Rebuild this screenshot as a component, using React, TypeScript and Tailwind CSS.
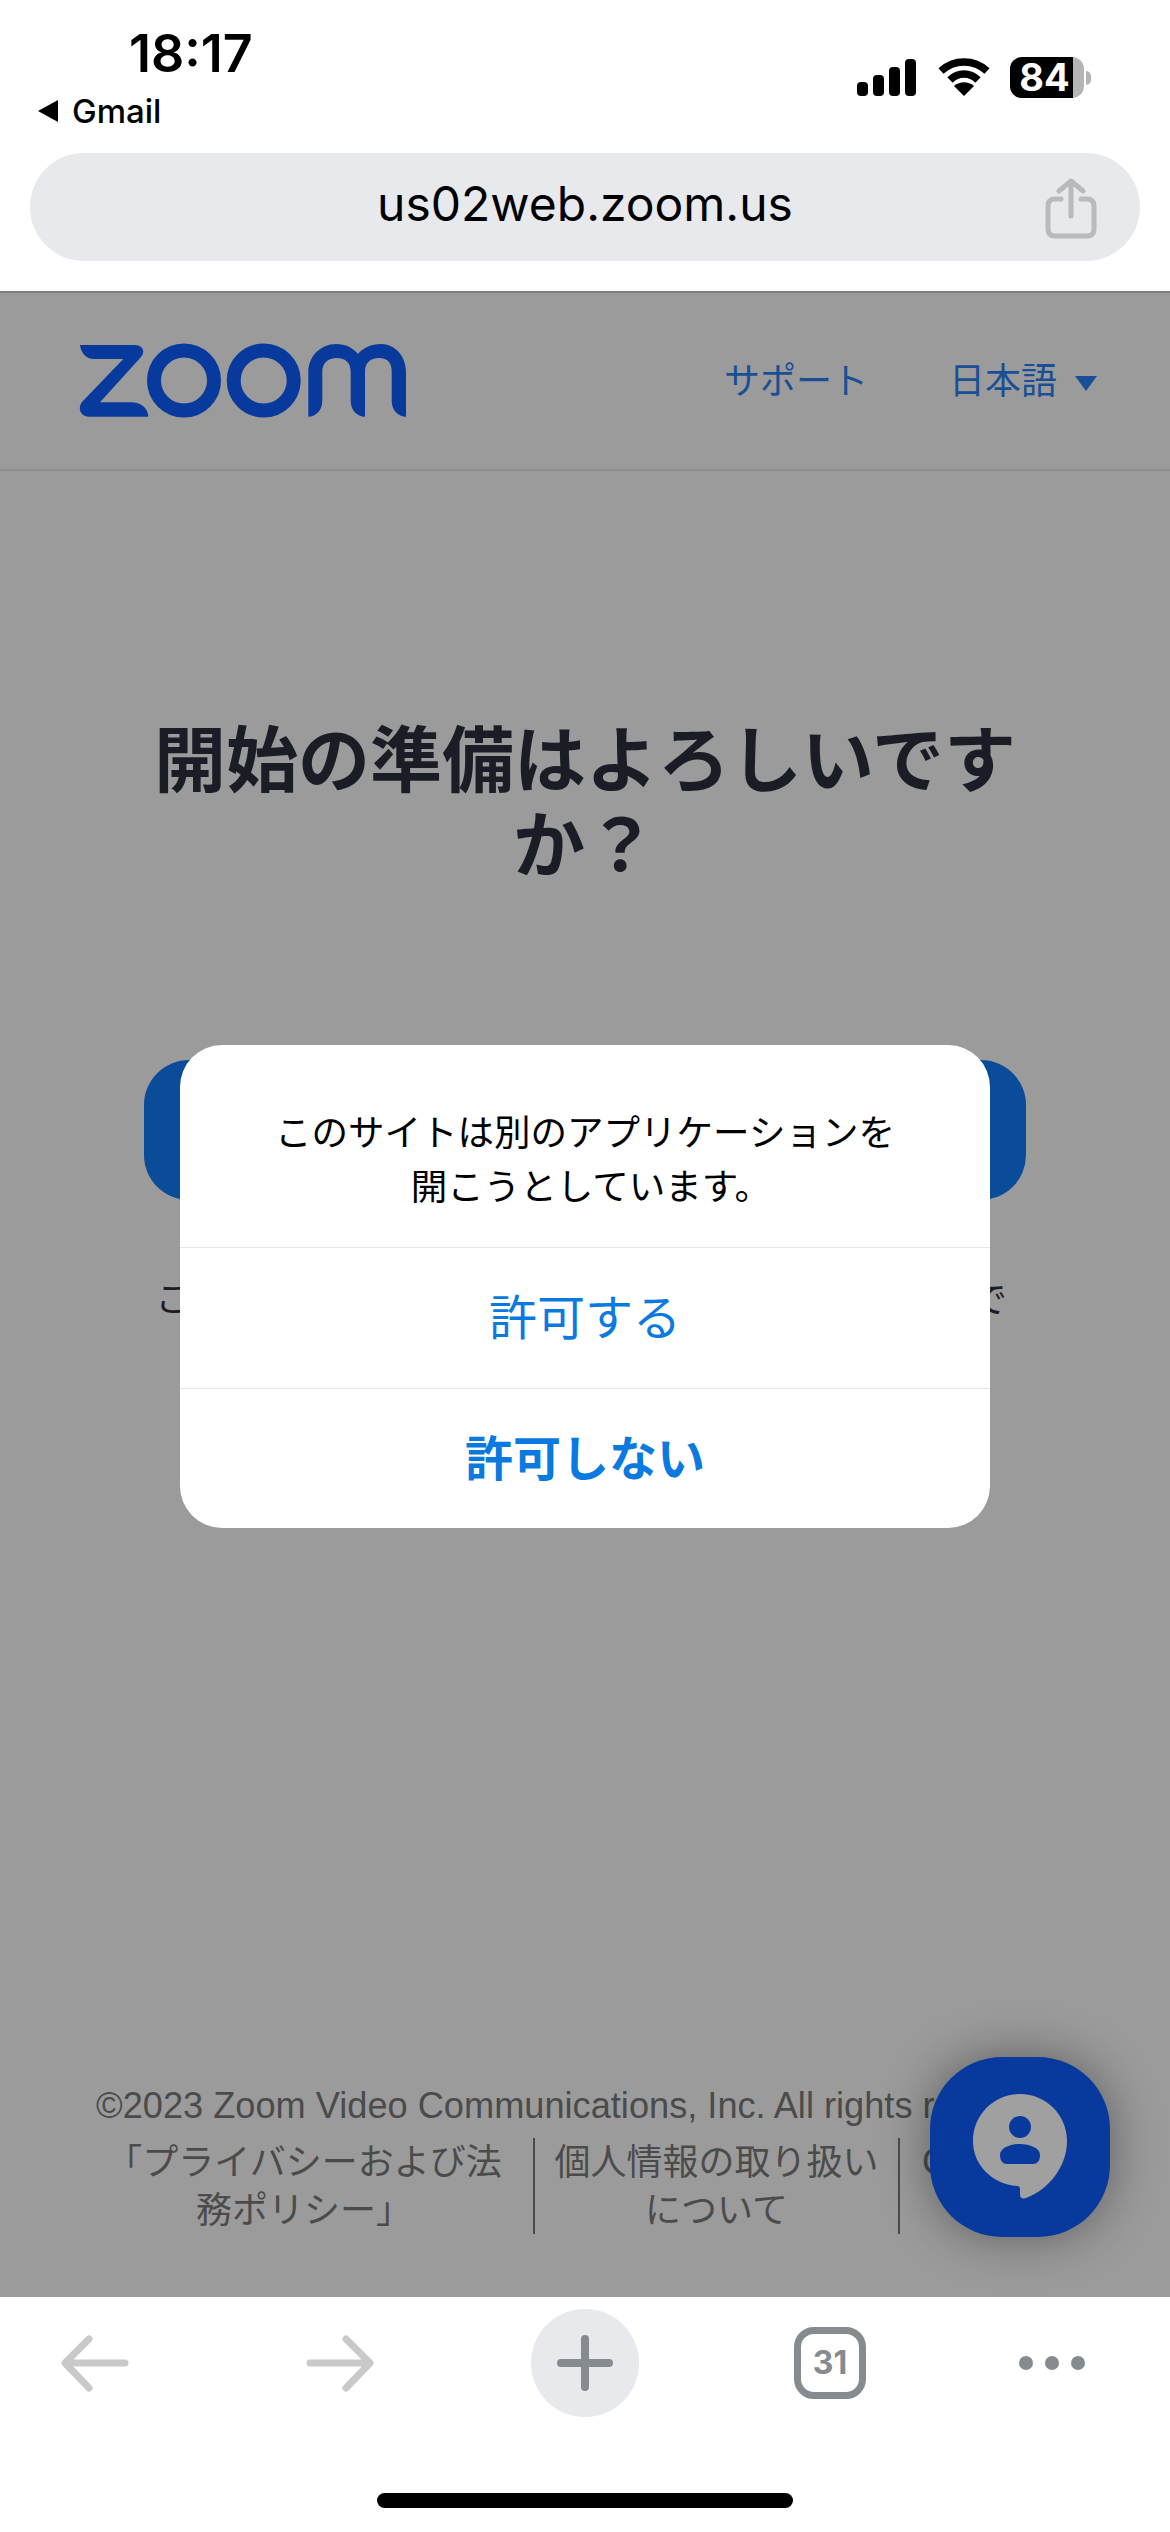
import React from 'react';

function ZoomLogo() {
  return (
    <svg width="330" height="76" viewBox="0 0 330 76" fill="#083a9e">
      <path d="M2 2H57C64 2 68 8 63 14L22 59.3H53C63 59.3 70 65 70.3 73.7H11C3 73.7-1 66 4 59L45.3 16H16C8 16 3 10 2 2Z" />
      <circle cx="106" cy="37.5" r="30" fill="none" stroke="#083a9e" strokeWidth="14" />
      <circle cx="185.7" cy="37.5" r="30" fill="none" stroke="#083a9e" strokeWidth="14" />
      <path d="M230.3 73.7V29C230.3 13 243 1 258 1C268 1 275 5 280 11C285 5 293 1 303 1C317 1 328 13 328 29V73.7C320 73.7 313.7 67 313.7 58V29C313.7 20 310 15 301 15C292 15 287 20 287 29V73.7C279 73.7 272.7 67 272.7 58V29C272.7 20 268 15 258.5 15C250 15 244.3 20 244.3 29V58C244.3 67 238 73.7 230.3 73.7Z" />
    </svg>
  );
}

function StatusBar() {
  return (
    <div className="flex justify-between h-[153px]">
      <div className="pl-[38px] pt-[25px]">
        <div className="ml-[91px] text-[52px] leading-[58px] font-semibold text-black">18:17</div>
        <div className="flex items-center mt-[10px] h-[36px]">
          <svg width="20" height="22" viewBox="0 0 20 22" fill="black">
            <path d="M20 0V22L0 11Z" />
          </svg>
          <span className="ml-[14px] text-[33px] leading-[36px] font-medium text-black">Gmail</span>
        </div>
      </div>
      <div className="flex items-start pt-[57px] pr-[79px]">
        <svg width="60" height="38" viewBox="0 0 60 38" fill="black" className="mt-[1px]">
          <rect x="0" y="24" width="11" height="14" rx="4" />
          <rect x="16" y="17" width="11" height="21" rx="4" />
          <rect x="32" y="9" width="11" height="29" rx="4" />
          <rect x="48" y="1" width="11" height="37" rx="4" />
        </svg>
        <svg width="52" height="38" viewBox="0 0 52 38" className="ml-[21px] mt-[1px]" fill="none" stroke="black" strokeWidth="7.5">
          <path d="M3 13C16 1 36 1 49 13" />
          <path d="M12 22C20 14 32 14 40 22" />
          <path d="M26 38L16 28C22 23 30 23 36 28Z" fill="black" stroke="none" />
        </svg>
        <div className="ml-[20px] flex items-center">
          <div className="w-[74px] h-[41px] rounded-[12px] bg-[#b5b5b5]">
            <div className="w-[63px] h-[41px] rounded-l-[12px] bg-black flex items-center justify-center pl-[6px]">
              <span className="text-[38px] leading-[41px] font-bold text-white">84</span>
            </div>
          </div>
          <div className="ml-[2px] w-[5px] h-[14px] rounded-r-full bg-[#b5b5b5]" />
        </div>
      </div>
    </div>
  );
}

function UrlBar() {
  return (
    <div className="h-[138px] px-[30px]">
      <div className="relative h-[108px] rounded-[54px] bg-[#e8e9ed] flex items-center justify-center">
        <span className="text-[48px] leading-[60px] text-black pb-[6px]">us02web.zoom.us</span>
        <svg width="52" height="62" viewBox="0 0 52 62" fill="none" stroke="#b9babd" strokeWidth="5" strokeLinecap="round" strokeLinejoin="round" className="absolute right-[43px] top-[25px]">
          <path d="M16 21H10C5.500 21 3 23.500 3 28V51C3 55.500 5.500 58 10 58H42C46.500 58 49 55.500 49 51V28C49 23.500 46.500 21 42 21H36" />
          <path d="M26 38V3M14 13L26 3L38 13" />
        </svg>
      </div>
    </div>
  );
}

function ChatButton() {
  return (
    <div className="absolute left-[930px] top-[1764px] w-[180px] h-[180px] rounded-[72px] bg-[#083a9e] shadow-[0_0_50px_rgba(0,0,0,0.4)]">
      <svg width="180" height="180" viewBox="0 0 180 180">
        <path d="M90 37C116 37 137 58 137 84C137 110 118 133 96 141C93 142 90 141 90 138V132C90 130 89 129 87 129C62 127 43 108 43 84C43 58 64 37 90 37Z" fill="#a0a0a0" />
        <circle cx="90" cy="70" r="11" fill="#083a9e" />
        <path d="M70 98C70 91 80 87 90 87C100 87 110 91 110 98C110 104 107 107 103 107H77C73 107 70 104 70 98Z" fill="#083a9e" />
      </svg>
    </div>
  );
}

function PermissionDialog() {
  return (
    <div className="absolute left-[180px] top-[752px] w-[810px] rounded-[42px] bg-white overflow-hidden text-center">
      <div className="h-[203px] pt-[61px] border-b border-[#e6e6e6] text-[36.500px] leading-[54px] text-black">
        <div>このサイトは別のアプリケーションを</div>
        <div className="pl-[12px]">開こうとしています。</div>
      </div>
      <div className="h-[141px] flex items-center justify-center border-b border-[#e6e6e6] text-[48px] text-[#0a7ae0]">許可する</div>
      <div className="h-[139px] flex items-center justify-center text-[48px] font-bold text-[#0a7ae0]">許可しない</div>
    </div>
  );
}

function WebPage() {
  return (
    <div className="relative flex-1 flex flex-col bg-[#9b9b9b] border-t-2 border-[#7d7d7d] overflow-hidden">
      <div className="h-[178px] flex items-center pl-[78px] pr-[73px] border-b-2 border-[#8e8e8e]">
        <ZoomLogo />
        <span className="ml-auto text-[36px] leading-[44px] text-[#1a4f96]">サポート</span>
        <span className="ml-[81px] text-[36px] leading-[44px] text-[#1a4f96]">日本語</span>
        <svg width="22" height="15" viewBox="0 0 22 15" fill="#1a4f96" className="ml-[18px] mt-[4px]">
          <path d="M0 0H22L11 15Z" />
        </svg>
      </div>
      <div className="w-[882px] mx-auto mt-[246px] text-center">
        <h1 className="text-[72px] leading-[85px] font-bold text-[#1b1d26]">開始の準備はよろしいですか？</h1>
        <div className="mt-[173px] h-[140px] rounded-[45px] bg-[#0b4c99]" />
        <p className="mt-[73px] pr-[8px] text-[35.500px] leading-[54px] whitespace-nowrap text-[#1b1d26]">この画面からアプリケーションを起動し、ブラウザで</p>
      </div>
      <div className="mt-auto pb-[63px] text-[36px] text-[#4b4b4b]">
        <div className="pl-[96px] text-[36.200px] leading-[44px] whitespace-nowrap [font-family:'Liberation_Sans','Noto_Sans_CJK_JP',sans-serif]">©2023 Zoom Video Communications, Inc. All rights reserved.</div>
        <div className="mt-[10px] flex leading-[48px] text-center">
          <div className="ml-[75px] w-[460px] border-r-2 border-[#4b4b4b]">
            <div>「プライバシーおよび法</div>
            <div>務ポリシー」</div>
          </div>
          <div className="w-[365px] border-r-2 border-[#4b4b4b]">
            <div>個人情報の取り扱い</div>
            <div>について</div>
          </div>
          <div className="pl-[22px] [font-family:'Liberation_Sans',sans-serif]">Cookie</div>
        </div>
      </div>
      <PermissionDialog />
      <ChatButton />
    </div>
  );
}

function BottomBar() {
  return (
    <div className="h-[235px] bg-white">
      <div className="flex items-center pl-[60px] pt-[12px]">
        <svg width="70" height="60" viewBox="0 0 70 60" fill="none" stroke="#c9c9c9" strokeWidth="7" strokeLinecap="round" strokeLinejoin="round">
          <path d="M6 30H65M29 6L5 30L29 55" />
        </svg>
        <svg width="70" height="60" viewBox="0 0 70 60" fill="none" stroke="#c9c9c9" strokeWidth="7" strokeLinecap="round" strokeLinejoin="round" className="ml-[175px]">
          <path d="M5 30H64M41 6L65 30L41 55" />
        </svg>
        <div className="ml-[156px] w-[108px] h-[108px] rounded-full bg-[#e8e9ed] flex items-center justify-center">
          <svg width="56" height="56" viewBox="0 0 56 56" fill="none" stroke="#868b90" strokeWidth="8" strokeLinecap="round">
            <path d="M28 4V52M4 28H52" />
          </svg>
        </div>
        <div className="ml-[155px] w-[72px] h-[72px] rounded-[20px] border-[7px] border-[#868b90] flex items-center justify-center">
          <span className="text-[32px] leading-[36px] font-bold text-[#868b90]">31</span>
        </div>
        <div className="ml-[153px] flex gap-[12px]">
          <div className="w-[14px] h-[14px] rounded-full bg-[#868b90]" />
          <div className="w-[14px] h-[14px] rounded-full bg-[#868b90]" />
          <div className="w-[14px] h-[14px] rounded-full bg-[#868b90]" />
        </div>
      </div>
      <div className="mt-[76px] mx-auto w-[416px] h-[15px] rounded-full bg-black" />
    </div>
  );
}

export default function App() {
  return (
    <div className="w-[1170px] h-[2532px] flex flex-col bg-white overflow-hidden [font-family:Inter,'Noto_Sans_CJK_JP',sans-serif]">
      <StatusBar />
      <UrlBar />
      <WebPage />
      <BottomBar />
    </div>
  );
}
